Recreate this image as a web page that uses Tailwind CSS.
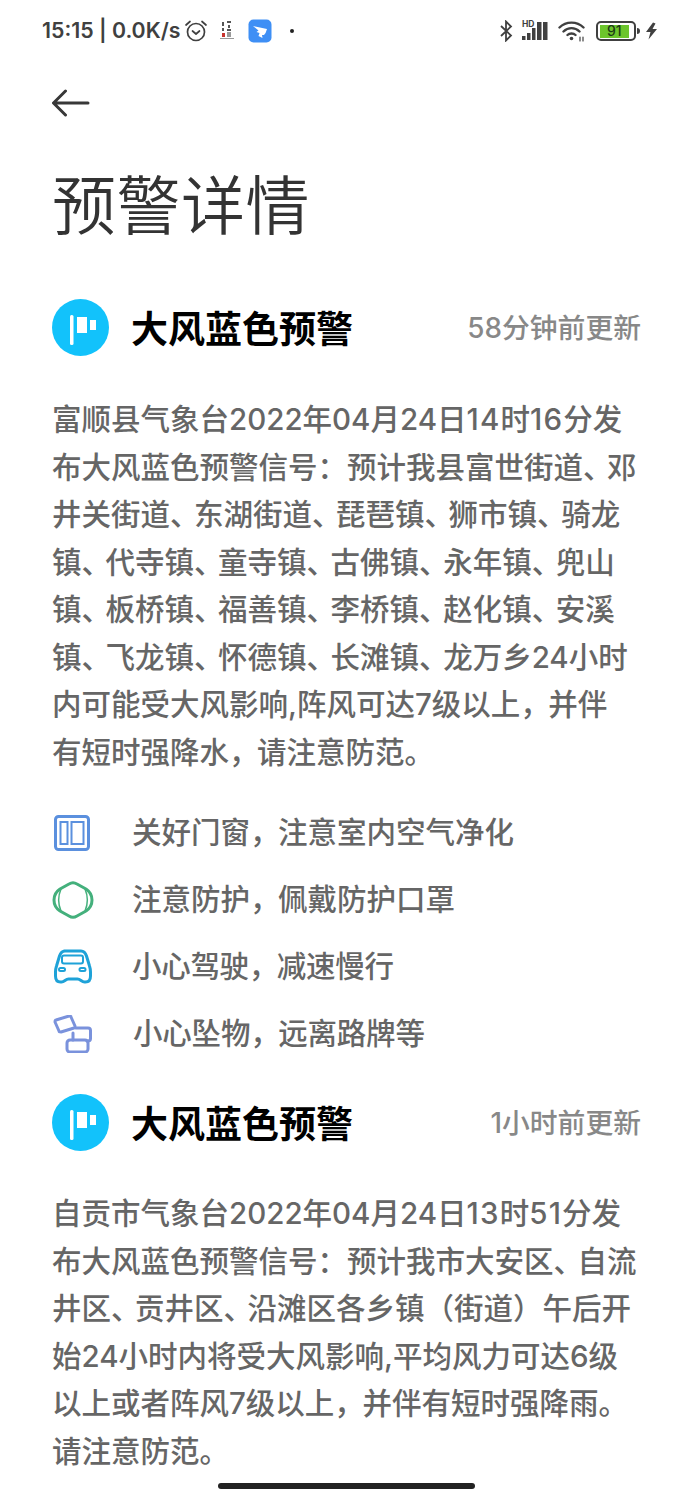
<!DOCTYPE html>
<html lang="zh">
  <head>
    <meta charset="UTF-8" />
    <title>预警详情</title>
    <script src="https://cdn.jsdelivr.net/npm/@tailwindcss/browser@4"></script>
  </head>
  <body class="bg-white font-['Inter','Noto_Sans_CJK_SC',sans-serif] w-[693px] h-[1500px] overflow-hidden relative">
    <!-- Status bar -->
    <div class="h-[62px] pl-[42px] pr-[35px] flex items-center justify-between text-[#404040]">
      <div class="flex items-center">
        <span class="font-semibold text-[21.300px] leading-none">15:15 | 0.0K/s</span>
        <svg class="ml-[4px]" width="24" height="24" viewBox="0 0 24 24" fill="none" stroke="#404040" stroke-width="1.700" stroke-linecap="round" stroke-linejoin="round"><circle cx="12" cy="13" r="8.500"/><path d="M8.500 12l3.500 3 3.500-3M2 6l4-3.500M22 6l-4-3.500"/></svg>
        <svg class="ml-[9px]" width="20" height="24" viewBox="0 0 20 24"><path d="M5 3h2v4H5zM5 9h2v3H5zM10 2h4v2h-4zM11 6h2v3h-2zM10 10h4v2h-4z" fill="#555"/><path d="M5 14h3v4H5z" fill="#c8322c"/><path d="M10 13h4v5h-4zM3 19h14v1H3z" fill="#999"/></svg>
        <svg class="ml-[11px]" width="24" height="24" viewBox="0 0 24 24"><rect width="23" height="23" x="0.500" y="0.500" rx="5" fill="#3e8ff5"/><path d="M5 7l14 3q-1 4-3 6h-2l.5 3-4-2 1-3-3-1 2-1.500z" fill="#fff"/></svg>
        <span class="ml-[18px] w-[4px] h-[4px] rounded-full bg-[#222]"></span>
      </div>
      <div class="flex items-center">
        <svg width="13" height="22" viewBox="0 0 13 22" fill="none" stroke="#404040" stroke-width="1.800"><path d="M1 6l10 9.500-5 5V1.500l5 5L1 16"/></svg>
        <div class="ml-[9px] relative w-[26px] h-[20px]">
          <span class="absolute left-0 top-[-1px] font-bold text-[8.500px] leading-none">HD</span>
          <svg class="absolute inset-0" width="26" height="20" viewBox="0 0 26 20" fill="#404040"><rect x="0" y="15" width="3.500" height="4"/><rect x="5" y="12" width="3.500" height="7"/><rect x="10" y="7" width="3.500" height="12"/><rect x="15" y="1" width="4.500" height="18"/><rect x="21" y="1" width="4.500" height="18"/></svg>
        </div>
        <svg class="ml-[10px]" width="27" height="22" viewBox="0 0 27 22" fill="none" stroke="#404040" stroke-width="2.400" stroke-linecap="round"><path d="M1.500 7.500C8 1 19 1 25.500 7.500M5.500 11.500C10 7 17 7 21.500 11.500M9.500 15C11.500 13 15.500 13 17.500 15"/><circle cx="13.500" cy="18.500" r="1.800" fill="#404040" stroke="none"/><path d="M22 17v4M25 17v4" stroke-width="1.200"/></svg>
        <div class="ml-[11px] w-[40px] h-[20px] rounded-[5px] border-[2.500px] border-[#404040] p-[1.500px]">
          <div class="w-[90%] h-full bg-[#6cc52c] flex items-center justify-center font-medium text-[14px] leading-none text-[#1c3a14]">91</div>
        </div>
        <span class="ml-[1px] w-[3px] h-[6px] bg-[#404040] rounded-r-sm"></span>
        <svg class="ml-[5px]" width="13" height="18" viewBox="0 0 13 17" fill="#404040"><path d="M8 0L1 9.500h4.500L3.500 17 12 6.500H7.500L10.500 1z"/></svg>
      </div>
    </div>

    <main class="px-[52px] text-[#666666]">
      <!-- Back -->
      <svg class="mt-[26px] block" width="38" height="30" viewBox="0 0 38 30" fill="none" stroke="#383838" stroke-width="3" stroke-linecap="round" stroke-linejoin="round"><path d="M36 15H2M13.500 3L1.500 15l12 12"/></svg>
      <h1 class="mt-[43px] text-[64px] leading-[90px] font-[350] text-[#333333] tracking-[0.500px]">预警详情</h1>

      <!-- First warning -->
      <section class="mt-[47px]">
        <div class="flex items-center h-[58px]">
          <svg class="shrink-0" width="57" height="57" viewBox="0 0 57 57"><circle cx="28.500" cy="28.500" r="28.500" fill="#12c2fb"/><rect x="18" y="16" width="3.500" height="30" rx="1.500" fill="#fff"/><path d="M25 18h10v16H25zM38 21h6v10h-6z" fill="#fff"/></svg>
          <h2 class="ml-[22px] pt-[4px] text-[37px] font-bold text-black leading-none">大风蓝色预警</h2>
          <span class="ml-auto pt-[4px] text-[27.800px] font-medium text-[#888888] leading-none">58分钟前更新</span>
        </div>
        <p class="mt-[40px] text-[29.500px] leading-[47.500px] font-medium whitespace-nowrap">
          富顺县气象台2022年04月24日<span class="tracking-[1.200px]">14</span>时<span class="tracking-[1.200px]">16</span>分发<br />
          布大风蓝色预警信号：预计我县富世街道<span class="tracking-[-5.500px]">、</span>邓<br />
          井关街道<span class="tracking-[-5.500px]">、</span>东湖街道<span class="tracking-[-5.500px]">、</span>琵琶镇<span class="tracking-[-5.500px]">、</span>狮市镇<span class="tracking-[-5.500px]">、</span>骑龙<br />
          镇<span class="tracking-[-5.500px]">、</span>代寺镇<span class="tracking-[-5.500px]">、</span>童寺镇<span class="tracking-[-5.500px]">、</span>古佛镇<span class="tracking-[-5.500px]">、</span>永年镇<span class="tracking-[-5.500px]">、</span>兜山<br />
          镇<span class="tracking-[-5.500px]">、</span>板桥镇<span class="tracking-[-5.500px]">、</span>福善镇<span class="tracking-[-5.500px]">、</span>李桥镇<span class="tracking-[-5.500px]">、</span>赵化镇<span class="tracking-[-5.500px]">、</span>安溪<br />
          镇<span class="tracking-[-5.500px]">、</span>飞龙镇<span class="tracking-[-5.500px]">、</span>怀德镇<span class="tracking-[-5.500px]">、</span>长滩镇<span class="tracking-[-5.500px]">、</span>龙万乡24小时<br />
          内可能受大风影响,阵风可达7级以上<span class="tracking-[-1.500px]">，</span>并伴<br />
          有短时强降水<span class="tracking-[-1.500px]">，</span>请注意防范。
        </p>
        <ul class="mt-[23px] flex flex-col text-[29.500px] font-medium">
          <li class="flex items-center h-[67px]">
            <svg class="shrink-0" width="38" height="36" viewBox="0 0 38 36" fill="none" stroke="#5b90de"><rect x="3.500" y="1.500" width="33" height="33" rx="3" stroke-width="3"/><rect x="8.500" y="7" width="7" height="22" stroke-width="2"/><rect x="19.500" y="7" width="12" height="22" stroke-width="2"/></svg>
            <span class="ml-[42px]">关好门窗<span class="tracking-[-1.500px]">，</span>注意室内空气净化</span>
          </li>
          <li class="flex items-center h-[67px]">
            <svg class="shrink-0" width="42" height="38" viewBox="0 0 42 38" fill="none" stroke="#44b07c" stroke-width="3" stroke-linejoin="round"><path d="M17 3q4-2.500 8 0l9 5q6 4 6 11t-6 11l-9 5q-4 2.500-8 0l-9-5q-6-4-6-11t6-11z"/><path d="M9 8c-3 7-3 15 0 22M33 8c3 7 3 15 0 22" stroke-width="1.500"/></svg>
            <span class="ml-[38px]">注意防护<span class="tracking-[-1.500px]">，</span>佩戴防护口罩</span>
          </li>
          <li class="flex items-center h-[67px]">
            <svg class="shrink-0 ml-[1px]" width="39" height="36" viewBox="0 0 39 36" fill="none" stroke="#1ea2d8" stroke-width="3" stroke-linejoin="round"><path d="M11 2h17c3 0 4.500 2 5.500 5l3 10c1 3 1 4 1 6v4c0 4-2 6-5 6h-1c-3 0-4-3-7-3h-9c-3 0-4 3-7 3h-1c-3 0-5-2-5-6v-4c0-2 0-3 1-6l3-10c1-3 2.500-5 5.500-5z"/><rect x="9" y="6.500" width="21" height="8" rx="2" stroke-width="2"/><rect x="6" y="19" width="6" height="3" rx="1.500" stroke-width="2"/><rect x="26.500" y="19" width="6" height="3" rx="1.500" stroke-width="2"/></svg>
            <span class="ml-[40px] tracking-[-0.300px]">小心驾驶<span class="tracking-[-1.500px]">，</span>减速慢行</span>
          </li>
          <li class="flex items-center h-[67px]">
            <svg class="shrink-0 ml-[1px]" width="39" height="38" viewBox="0 0 39 38" fill="none" stroke="#7a92dc" stroke-width="3" stroke-linejoin="round" stroke-linecap="round"><path d="M3 5l13-4c1 0 2 0 2 1l4 9c0 1 0 2-1 2L8 17c-1 0-2 0-2-1L2 7c0-1 0-2 1-2z"/><path d="M23 13h12c1.500 0 2.500 1 2.500 2.500v8c0 1.500-1 2.500-2.500 2.500h-1M20 18v7"/><rect x="14" y="25" width="21" height="12" rx="3"/></svg>
            <span class="ml-[41px] tracking-[-0.200px]">小心坠物<span class="tracking-[-1.500px]">，</span>远离路牌等</span>
          </li>
        </ul>
      </section>

      <!-- Second warning -->
      <section class="mt-[26px]">
        <div class="flex items-center h-[58px]">
          <svg class="shrink-0" width="57" height="57" viewBox="0 0 57 57"><circle cx="28.500" cy="28.500" r="28.500" fill="#12c2fb"/><rect x="18" y="16" width="3.500" height="30" rx="1.500" fill="#fff"/><path d="M25 18h10v16H25zM38 21h6v10h-6z" fill="#fff"/></svg>
          <h2 class="ml-[22px] pt-[4px] text-[37px] font-bold text-black leading-none">大风蓝色预警</h2>
          <span class="ml-auto pt-[4px] text-[27.800px] font-medium text-[#888888] leading-none">1小时前更新</span>
        </div>
        <p class="mt-[39px] text-[29.500px] leading-[47.500px] font-medium whitespace-nowrap">
          自贡市气象台2022年04月24日<span class="tracking-[1.200px]">13</span>时<span class="tracking-[1.200px]">51</span>分发<br />
          布大风蓝色预警信号：预计我市大安区<span class="tracking-[-5.500px]">、</span>自流<br />
          井区<span class="tracking-[-5.500px]">、</span>贡井区<span class="tracking-[-5.500px]">、</span>沿滩区各乡镇（街道）午后开<br />
          始24小时内将受大风影响,平均风力可达6级<br />
          以上或者阵风7级以上<span class="tracking-[-1.500px]">，</span>并伴有短时强降雨。<br />
          请注意防范。
        </p>
      </section>
    </main>

    <!-- Home indicator, sits over the page -->
    <div class="absolute left-[218px] bottom-[11px] w-[257px] h-[6px] rounded-full bg-[#222222]"></div>
  </body>
</html>
